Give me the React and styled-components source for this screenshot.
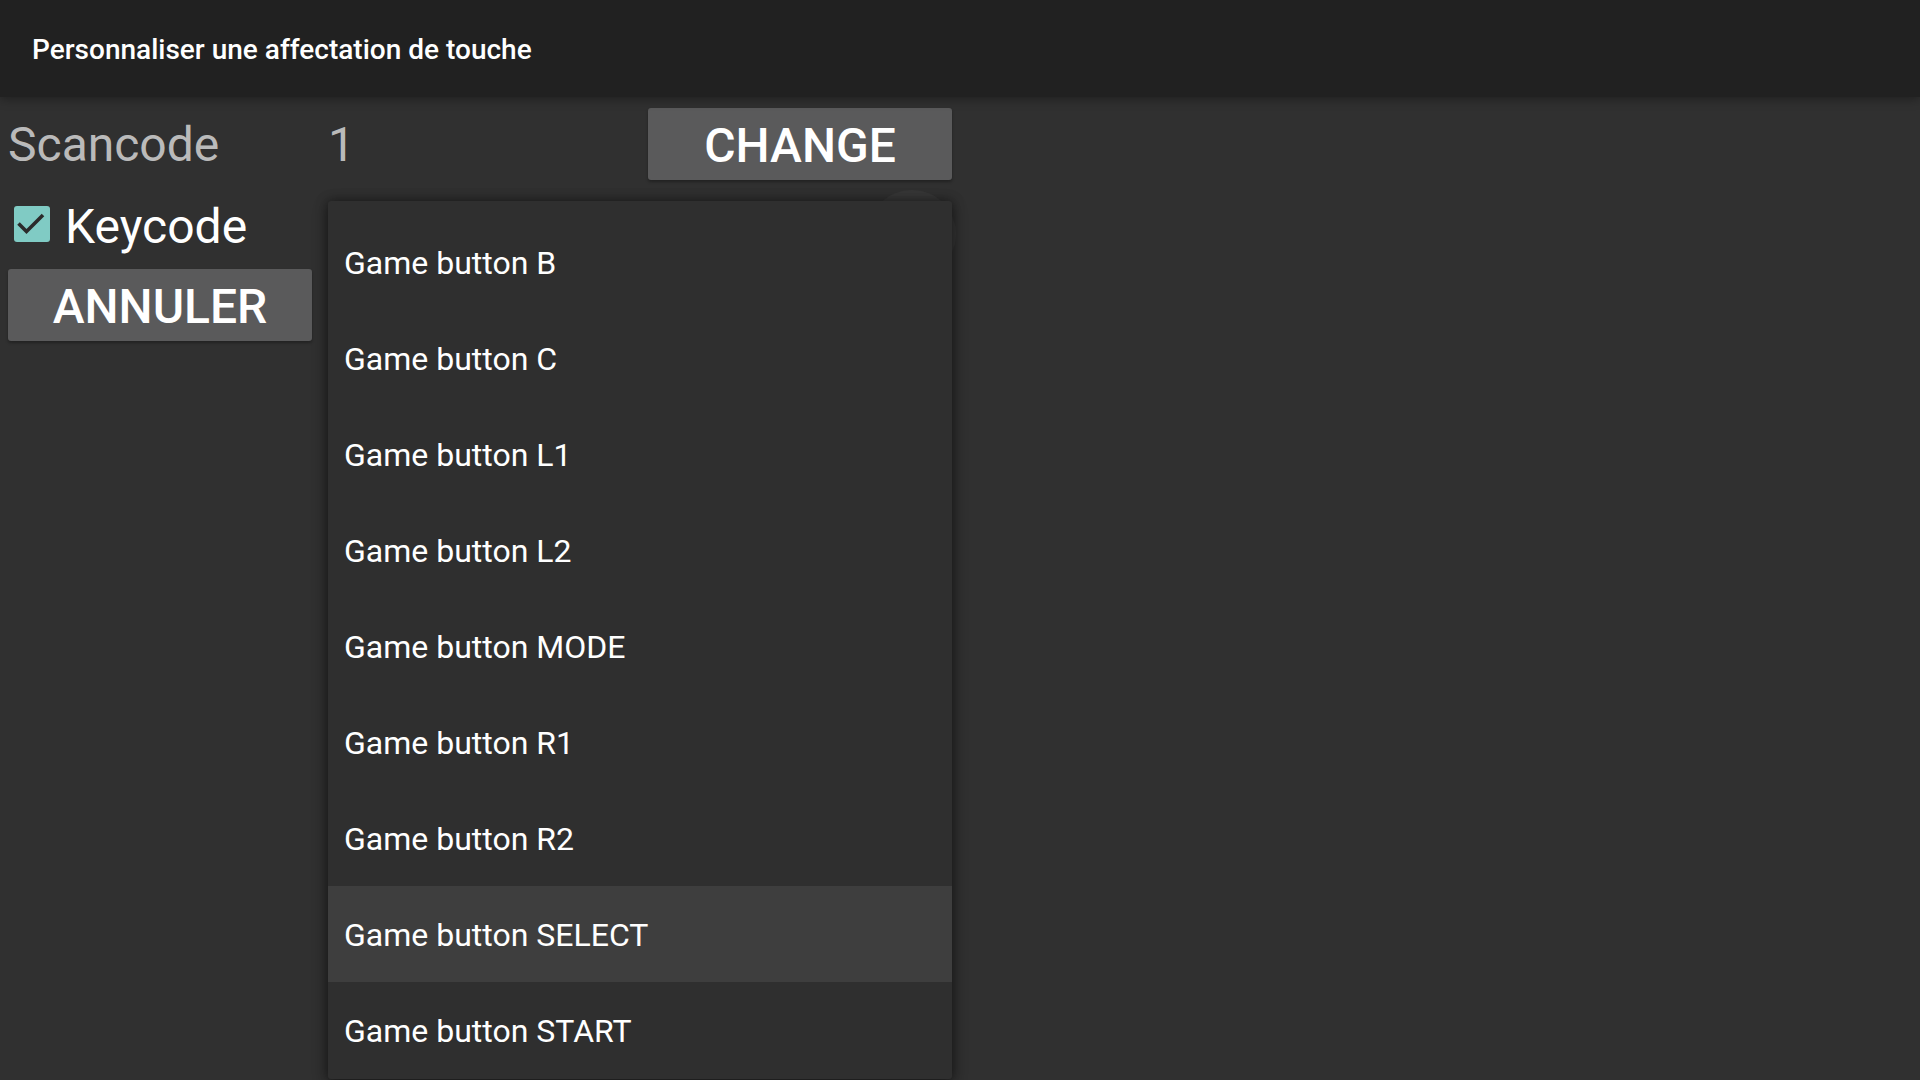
import React from "react";
import styled, { createGlobalStyle } from "styled-components";

const Global = createGlobalStyle`
  html, body { margin: 0; padding: 0; height: 100%; background: #303030; overflow: hidden; }
  body { font-family: Roboto, "Noto Sans", sans-serif; }
  #root { height: 100%; }
`;

const Screen = styled.div`
  position: relative;
  width: 1920px;
  height: 1080px;
  background: #303030;
  overflow: hidden;
  display: flex;
  flex-direction: column;
`;

const TitleBar = styled.header`
  position: relative;
  z-index: 2;
  height: 97px;
  flex: none;
  background: #212121;
  display: flex;
  align-items: center;
  padding-left: 32px;
  padding-top: 2px;
  box-sizing: border-box;
  box-shadow: 0 2px 10px rgba(0, 0, 0, 0.35);
`;

const Title = styled.h1`
  margin: 0;
  font-size: 28px;
  font-weight: 500;
  color: #ffffff;
  letter-spacing: 0;
`;

const Content = styled.main`
  position: relative;
  flex: 1;
  padding: 11px 8px 0;
  display: flex;
  flex-direction: column;
`;

const FieldRow = styled.div`
  display: grid;
  grid-template-columns: 320px 320px 304px;
  align-items: center;
  height: 72px;
`;

const Label = styled.span`
  font-size: 48px;
  color: #bababa;
  line-height: 1;
  padding-top: 2px;
`;

const Value = styled.span`
  font-size: 48px;
  color: #bababa;
  line-height: 1;
  padding-top: 2px;
`;

const ActionButton = styled.button`
  width: 304px;
  height: 72px;
  border: none;
  border-radius: 3px;
  background: #5a5a5b;
  color: #ffffff;
  font-family: Roboto, sans-serif;
  font-size: 48px;
  font-weight: 500;
  text-transform: uppercase;
  box-shadow: 0 2px 3px rgba(0, 0, 0, 0.3);
  padding: 2px 0 0;
  margin-top: ${(p) => p.$mt || 0}px;
  display: flex;
  align-items: center;
  justify-content: center;
`;

const CheckRow = styled.label`
  display: flex;
  align-items: center;
  height: 88px;
  padding-left: 6px;
  gap: 15px;
`;

const CheckBox = styled.span`
  width: 36px;
  height: 36px;
  border-radius: 3px;
  background: #80cbc4;
  display: flex;
  align-items: center;
  justify-content: center;
`;

const CheckLabel = styled.span`
  font-size: 48px;
  color: #ffffff;
  line-height: 1;
  padding-top: 5px;
`;

const Ripple = styled.div`
  position: absolute;
  left: 868px;
  top: 93px;
  width: 88px;
  height: 88px;
  border-radius: 50%;
  background: #373737;
`;

const Menu = styled.ul`
  position: absolute;
  left: 328px;
  top: 104px;
  width: 624px;
  margin: 0;
  padding: 13px 0 1px;
  list-style: none;
  background: #2f2f2f;
  border-radius: 3px;
  box-shadow: 0 0 12px rgba(0, 0, 0, 0.45), 0 4px 16px rgba(0, 0, 0, 0.3);
  z-index: 3;
`;

const MenuItem = styled.li`
  height: 96px;
  box-sizing: border-box;
  padding: 2px 0 0 16px;
  display: flex;
  align-items: center;
  font-size: 32px;
  color: #ffffff;
  background: ${(p) => (p.$active ? "#3e3e3e" : "transparent")};
`;

const items = [
  "Game button B",
  "Game button C",
  "Game button L1",
  "Game button L2",
  "Game button MODE",
  "Game button R1",
  "Game button R2",
  "Game button SELECT",
  "Game button START",
];

export default function App() {
  return (
    <Screen>
      <Global />
      <TitleBar>
        <Title>Personnaliser une affectation de touche</Title>
      </TitleBar>
      <Content>
        <FieldRow>
          <Label>Scancode</Label>
          <Value>1</Value>
          <ActionButton>Change</ActionButton>
        </FieldRow>
        <CheckRow>
          <CheckBox>
            <svg width="36" height="36" viewBox="0 0 36 36">
              <path
                d="M4.5 17.5 L12.5 25.5 L29 9"
                fill="none"
                stroke="#2b2b2b"
                strokeWidth="3.6"
              />
            </svg>
          </CheckBox>
          <CheckLabel>Keycode</CheckLabel>
        </CheckRow>
        <ActionButton $mt={1}>Annuler</ActionButton>
        <Ripple />
        <Menu>
          {items.map((t) => (
            <MenuItem key={t} $active={t === "Game button SELECT"}>
              {t}
            </MenuItem>
          ))}
        </Menu>
      </Content>
    </Screen>
  );
}
